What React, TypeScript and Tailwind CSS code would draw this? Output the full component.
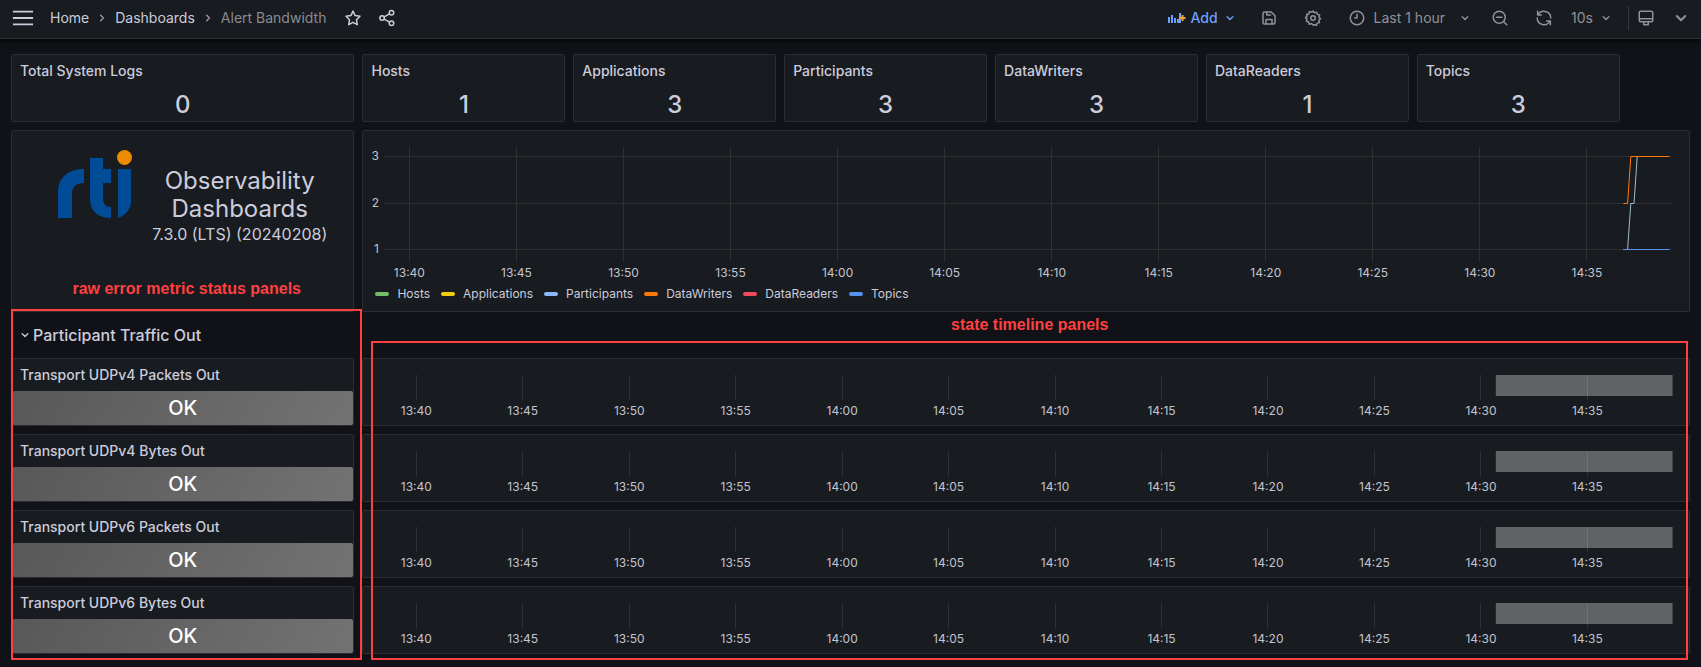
import type { ReactNode } from 'react';

const stats = [
  { title: 'Hosts', value: 1 },
  { title: 'Applications', value: 3 },
  { title: 'Participants', value: 3 },
  { title: 'DataWriters', value: 3 },
  { title: 'DataReaders', value: 1 },
  { title: 'Topics', value: 3 },
];

const legend = [
  { name: 'Hosts', color: 'bg-[#73bf69]' },
  { name: 'Applications', color: 'bg-[#f2cc0c]' },
  { name: 'Participants', color: 'bg-[#8ab8ff]' },
  { name: 'DataWriters', color: 'bg-[#ff780a]' },
  { name: 'DataReaders', color: 'bg-[#f2495c]' },
  { name: 'Topics', color: 'bg-[#5794f2]' },
];

const transports = [
  'Transport UDPv4 Packets Out',
  'Transport UDPv4 Bytes Out',
  'Transport UDPv6 Packets Out',
  'Transport UDPv6 Bytes Out',
];

// Minutes since the start of the one hour window (13:39)
const ticks = [
  { label: '13:40', at: 1 },
  { label: '13:45', at: 6 },
  { label: '13:50', at: 11 },
  { label: '13:55', at: 16 },
  { label: '14:00', at: 21 },
  { label: '14:05', at: 26 },
  { label: '14:10', at: 31 },
  { label: '14:15', at: 36 },
  { label: '14:20', at: 41 },
  { label: '14:25', at: 46 },
  { label: '14:30', at: 51 },
  { label: '14:35', at: 56 },
];

const x = (minutes: number) => `${(minutes / 60) * 100}%`;

const rows = [
  { value: 3, y: 10 },
  { value: 2, y: 57 },
  { value: 1, y: 103 },
];

const segments = [
  { color: '#8ab8ff', from: [57.7, 103], to: [57.9, 103] },
  { color: '#a3bfc4', from: [57.9, 103], to: [58.05, 57] },
  { color: '#8ab8ff', from: [58.05, 57], to: [58.2, 57] },
  { color: '#a3bfc4', from: [58.2, 57], to: [58.35, 10] },
  { color: '#ff780a', from: [57.7, 57], to: [57.9, 57] },
  { color: '#ff780a', from: [57.9, 57], to: [58.05, 10] },
  { color: '#ff780a', from: [58.05, 10], to: [59.85, 10] },
  { color: '#5794f2', from: [57.7, 103], to: [59.85, 103] },
];

function Icon({ className = 'size-[18px]', children }: { className?: string; children: ReactNode }) {
  return (
    <svg
      viewBox="0 0 24 24"
      className={`shrink-0 ${className}`}
      fill="none"
      stroke="currentColor"
      strokeWidth="2"
      strokeLinecap="round"
      strokeLinejoin="round"
      aria-hidden="true"
    >
      {children}
    </svg>
  );
}

function ChevronDown({ className = 'size-4' }: { className?: string }) {
  return (
    <Icon className={className}>
      <path d="M7.800 10l4.200 4.200L16.200 10" />
    </Icon>
  );
}

function ChevronRight() {
  return (
    <Icon className="size-4 text-[#9a9ba6]">
      <path d="M10 7.800l4.200 4.200L10 16.200" />
    </Icon>
  );
}

function Header() {
  return (
    <header className="flex h-[39px] items-center justify-between border-b border-[#2e3036] bg-[#181b1f] pr-2 pb-[3px] pl-3 text-sm shadow-[0_1px_6px_#000000]">
      <div className="flex items-center">
        <button aria-label="Menu" className="mr-4">
          <Icon className="size-[22px]">
            <path d="M1 5h22M1 12h22M1 19h22" strokeLinecap="butt" />
          </Icon>
        </button>
        <nav className="flex items-center gap-[5px]" aria-label="Breadcrumb">
          <a href="#home">Home</a>
          <ChevronRight />
          <a href="#dashboards">Dashboards</a>
          <ChevronRight />
          <span className="text-[#8a8b93]">Alert Bandwidth</span>
        </nav>
        <button aria-label="Mark as favorite" className="ml-[18px]">
          <Icon>
            <path d="M12 2.800l2.800 6 6.500.9-4.700 4.600 1.100 6.600L12 17.800l-5.700 3.100 1.100-6.600L2.700 9.700l6.500-.9z" />
          </Icon>
        </button>
        <button aria-label="Share" className="ml-4">
          <Icon>
            <circle cx="18" cy="5" r="3" />
            <circle cx="5.500" cy="12" r="3" />
            <circle cx="18" cy="19" r="3" />
            <path d="M8.200 10.600l7.100-4M8.200 13.400l7.100 4" />
          </Icon>
        </button>
      </div>

      <div className="flex items-center text-[#91929b]">
        <button className="flex items-center gap-1 font-medium text-[#6e9fff]">
          <svg viewBox="0 0 18 16" className="h-4 w-[18px]" aria-hidden="true">
            <path d="M1 7v6M4 5v8M7 8v5M10 9v4M12 3v10" stroke="currentColor" strokeWidth="2" fill="none" />
            <path d="M14.500 5v6M11.500 8h6" stroke="#f9a12e" strokeWidth="2" fill="none" />
          </svg>
          Add
          <ChevronDown />
        </button>
        <button aria-label="Save dashboard" className="ml-[22px]">
          <Icon>
            <path d="M4 6a2 2 0 0 1 2-2h9l5 5v9a2 2 0 0 1-2 2H6a2 2 0 0 1-2-2zM9 4v4h5M8 20v-6h8v6" />
          </Icon>
        </button>
        <button aria-label="Dashboard settings" className="ml-6.5">
          <Icon>
            <path d="M12 2.800l2 2.200 2.900-.8.900 3 3 .9-.8 2.900 2 2-2.200 2 .8 2.900-3 .9-.9 3-2.900-.8L12 21.400l-2-1.900-2.900.8-.9-3-3-.9.8-2.900-2-2 2.200-2-.8-2.200 3-.9.900-3 2.900.8z" />
            <circle cx="12" cy="12" r="3" />
          </Icon>
        </button>
        <button className="ml-6.5 flex items-center gap-2">
          <Icon>
            <circle cx="12" cy="12" r="9" />
            <path d="M12 7v5H9" />
          </Icon>
          <span className="pr-1">Last 1 hour</span>
          <ChevronDown />
        </button>
        <button aria-label="Zoom out" className="ml-[18px]">
          <Icon>
            <circle cx="11" cy="11" r="8" />
            <path d="M17 17l4 4M7.500 11h7" />
          </Icon>
        </button>
        <button aria-label="Refresh" className="ml-6.5">
          <Icon>
            <path d="M3.500 3v5h5M20.500 21v-5h-5M4 8A9 9 0 0 1 21 12M20 16A9 9 0 0 1 3 12" />
          </Icon>
        </button>
        <button className="ml-[18px] flex items-center gap-[5px]">
          10s
          <ChevronDown />
        </button>
        <div className="ml-3.5 h-6 w-px bg-[#35373d]" />
        <button aria-label="Kiosk mode" className="ml-2">
          <Icon>
            <path d="M5 3h14a2 2 0 0 1 2 2v10a2 2 0 0 1-2 2H5a2 2 0 0 1-2-2V5a2 2 0 0 1 2-2zM3 13h18M9 17v4h6v-4" />
          </Icon>
        </button>
        <button aria-label="Hide top bar" className="ml-3.5">
          <ChevronDown className="size-6" />
        </button>
      </div>
    </header>
  );
}

function Panel({ className = '', children }: { className?: string; children: ReactNode }) {
  return (
    <section className={`rounded-xs border border-[#2b2d32] bg-[#181b1f] ${className}`}>
      {children}
    </section>
  );
}

function Stat({ title, value, className }: { title: string; value: number; className: string }) {
  return (
    <Panel className={`h-[68px] ${className}`}>
      <h2 className="px-2 pt-1.5 text-sm font-medium">{title}</h2>
      <p className="pt-2 text-center text-2xl leading-8 font-medium">{value}</p>
    </Panel>
  );
}

function Logo() {
  return (
    <svg viewBox="0 0 74 69" className="h-[69px] w-[74px]" role="img" aria-label="RTI">
      <g fill="#004c97">
        <path d="M0 68V42C0 27 11 19 26 19v14c-8 0-12 4-12 10v25z" />
        <path d="M32 8h13v11h8v14h-8v16c0 5 3 8 8 8v11c-13 0-21-7-21-19z" />
        <path d="M60 19h13v32c0 8-5 14-13 17z" />
      </g>
      <circle cx="66.500" cy="7.500" r="7.500" fill="#ed8b00" />
    </svg>
  );
}

function EntityChart() {
  return (
    <Panel className="col-span-19 h-[182px] pt-[15px] pr-4 pl-[25px]">
      <svg className="h-[136px] w-full overflow-visible" role="img" aria-label="Entities over time">
        <g stroke="#2d2f32" shapeRendering="crispEdges">
          {ticks.map((t) => (
            <line key={t.label} x1={x(t.at)} x2={x(t.at)} y1="1" y2="116" />
          ))}
          {rows.map((r) => (
            <line key={r.value} x1="-4" x2="100%" y1={r.y} y2={r.y} />
          ))}
        </g>
        {segments.map((s, i) => (
          <line key={i} x1={x(s.from[0])} y1={s.from[1] + 0.5} x2={x(s.to[0])} y2={s.to[1] + 0.5} stroke={s.color} />
        ))}
        <g fill="#c3c4d0" fontSize="12">
          {rows.map((r) => (
            <text key={r.value} x="-9" y={r.y + 4} textAnchor="end">{r.value}</text>
          ))}
          {ticks.map((t) => (
            <text key={t.label} x={x(t.at)} y="131" textAnchor="middle">{t.label}</text>
          ))}
        </g>
      </svg>
      <ul className="-ml-[13px] flex items-center gap-[11px] pt-1 text-xs">
        {legend.map((item) => (
          <li key={item.name} className="flex items-center gap-2">
            <span className={`h-1 w-3.5 rounded-full ${item.color}`} />
            {item.name}
          </li>
        ))}
      </ul>
    </Panel>
  );
}

function StatusPanel({ title }: { title: string }) {
  return (
    <Panel className="flex h-[68px] flex-col">
      <h3 className="px-2 py-1.5 text-sm font-medium">{title}</h3>
      <p className="flex flex-1 items-center justify-center rounded-xs bg-linear-120 from-[#585858] to-[#737373] text-xl font-medium text-white">
        OK
      </p>
    </Panel>
  );
}

function TimelinePanel({ title }: { title: string }) {
  return (
    <Panel className="h-[68px] pt-4 pr-4 pl-8">
      <svg className="h-10 w-full overflow-visible" role="img" aria-label={title}>
        <rect x={x(51.7)} y="0" width={x(8.3)} height="21" fill="#616263" />
        <g stroke="#ffffff" strokeOpacity="0.1" shapeRendering="crispEdges">
          {ticks.map((t) => (
            <line key={t.label} x1={x(t.at)} x2={x(t.at)} y1="0" y2="25" />
          ))}
        </g>
        <g fill="#c3c4d0" fontSize="12">
          {ticks.map((t) => (
            <text key={t.label} x={x(t.at)} y="40" textAnchor="middle">{t.label}</text>
          ))}
        </g>
      </svg>
    </Panel>
  );
}

function Callout({ label, className, labelClassName }: { label: string; className: string; labelClassName: string }) {
  return (
    <div className={`pointer-events-none absolute border-2 border-[#ff4040] ${className}`}>
      <p className={`absolute inset-x-0 text-center font-['Liberation_Sans',sans-serif] text-base leading-5 font-bold text-[#ff4040] ${labelClassName}`}>
        {label}
      </p>
    </div>
  );
}

export default function App() {
  return (
    <div className="min-h-screen bg-[#111217] font-[Inter,sans-serif] text-[#ccccdc]">
      <Header />
      <main className="grid grid-cols-24 gap-2 px-[11px] pt-[15px]">
        <Stat title="Total System Logs" value={0} className="col-span-5" />
        {stats.map((s) => (
          <Stat key={s.title} title={s.title} value={s.value} className="col-span-3" />
        ))}

        <Panel className="col-span-5 col-start-1 flex h-[182px] items-start justify-center gap-5 pt-[19px] pl-5">
          <Logo />
          <div className="pt-[17px] text-center">
            <h1 className="text-2xl leading-7">
              Observability
              <br />
              Dashboards
            </h1>
            <p className="text-base leading-[22px]">7.3.0 (LTS) (20240208)</p>
          </div>
        </Panel>
        <EntityChart />

        <div className="relative col-span-5 flex flex-col gap-2">
          <button className="flex h-[30px] items-center pl-1.5 text-base font-medium">
            <ChevronDown />
            Participant Traffic Out
          </button>
          {transports.map((t) => (
            <StatusPanel key={t} title={t} />
          ))}
          <Callout
            label="raw error metric status panels"
            className="-top-[11px] -right-2 -bottom-1.5 left-0"
            labelClassName="-top-8"
          />
        </div>
        <div className="relative col-span-19 flex flex-col gap-2 pt-[38px]">
          {transports.map((t) => (
            <TimelinePanel key={t} title={t} />
          ))}
          <Callout
            label="state timeline panels"
            className="top-[21px] right-0.5 -bottom-1.5 left-[9px]"
            labelClassName="-top-7"
          />
        </div>
      </main>
    </div>
  );
}
